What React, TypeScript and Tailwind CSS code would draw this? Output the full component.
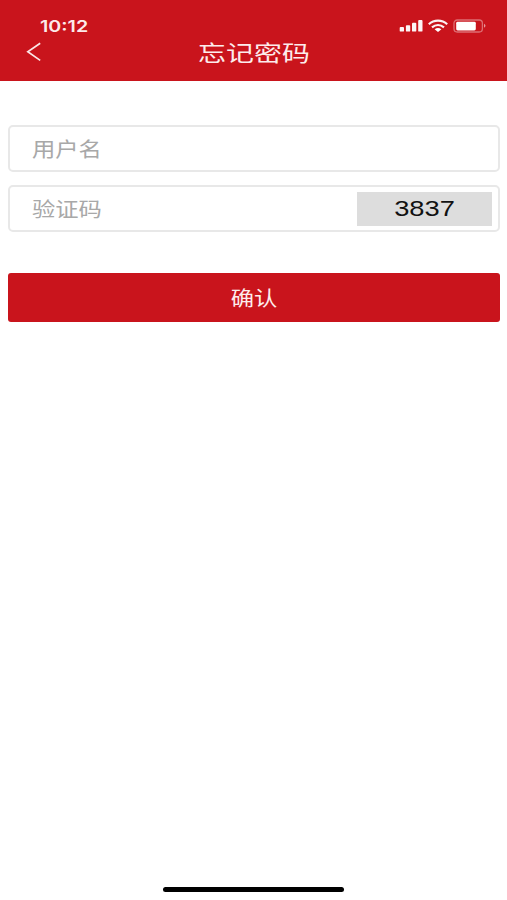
import React from "react";

const cjk = "font-['Noto_Sans_CJK_SC','Noto_Sans',sans-serif]";

function StatusIcons() {
  return (
    <svg width="90" height="18" viewBox="0 0 90 18" fill="none" aria-hidden="true">
      <g fill="#fff" fillOpacity="0.96">
        <rect x="2.7" y="11" width="4.3" height="4.6" rx="0.9" />
        <rect x="8.9" y="9.2" width="4.3" height="6.4" rx="0.9" />
        <rect x="15" y="6.8" width="4.3" height="8.8" rx="0.9" />
        <rect x="21.2" y="4" width="4.3" height="11.6" rx="0.9" />
      </g>
      <g stroke="#fff" strokeOpacity="0.94" strokeWidth="2.2">
        <path d="M31.8 8.2C37 3.5 45 3.5 50.2 8.2" />
        <path d="M35 11.4C38.6 8.3 43.4 8.3 47 11.4" />
      </g>
      <path d="M37.6 13.2Q41 10.8 44.4 13.2L41 16Z" fill="#fff" />
      <rect x="57" y="4" width="28.4" height="12" rx="3.2" stroke="#fff" strokeOpacity="0.38" strokeWidth="1.3" />
      <rect x="59.2" y="5.8" width="19.6" height="8.6" rx="1.4" fill="#fff" />
      <path d="M87 7.8Q90 9.8 87 11.8Z" fill="#fff" fillOpacity="0.55" />
    </svg>
  );
}

function Field({ label, children }: { label: string; children?: React.ReactNode }) {
  return (
    <div className="flex h-[47px] items-center justify-between rounded-[5px] border-2 border-[#e8e8e8] bg-white pr-[6px] pl-[22px]">
      <span className={`${cjk} origin-left scale-x-[1.165] text-[20px] leading-[24px] text-[#a8a8a8]`}>
        {label}
      </span>
      {children}
    </div>
  );
}

export default function App() {
  return (
    <div className="flex h-[900px] w-[507px] flex-col overflow-hidden bg-white">
      <header className="h-[81px] shrink-0 bg-[#c9141c]">
        <div className="flex h-[37px] items-start justify-between pt-[16px] pr-[20px] pl-[40px]">
          <span className="origin-left scale-x-[1.23] font-['Inter',sans-serif] text-[16px] leading-[20px] font-semibold text-[#fdeaea]">
            10:12
          </span>
          <StatusIcons />
        </div>
        <div className="grid h-[29px] grid-cols-[1fr_auto_1fr] items-center pl-px">
          <svg className="mt-px ml-[25px]" width="16" height="20" viewBox="0 0 16 20" fill="none" aria-label="返回">
            <path d="M14.2 1.2L1.8 9.8L14.2 18.4" stroke="#fbe6e6" strokeWidth="1.7" />
          </svg>
          <h1 className={`${cjk} scale-x-[1.27] text-[22px] leading-[29px] font-normal text-[#fdecec]`}>忘记密码</h1>
          <span />
        </div>
      </header>

      <main className="flex flex-1 flex-col pt-[44px] pr-[7px] pl-[8px]">
        <div className="flex flex-col gap-[13px]">
          <Field label="用户名" />
          <Field label="验证码">
            <div className="flex h-[34px] w-[135px] items-center justify-center bg-[#dddddd]">
              <span className="scale-x-[1.24] font-['Liberation_Sans',sans-serif] text-[22px] leading-[24px] text-[#111]">3837</span>
            </div>
          </Field>
        </div>
        <button className="mt-[41px] flex h-[49px] items-center justify-center rounded-[3px] bg-[#c9141c]">
          <span className={`${cjk} scale-x-[1.165] text-[20px] leading-[24px] text-[#fdecec]`}>确认</span>
        </button>
      </main>

      <footer className="flex justify-center pb-[8px]">
        <div className="h-[5px] w-[181px] rounded-full bg-black" />
      </footer>
    </div>
  );
}
